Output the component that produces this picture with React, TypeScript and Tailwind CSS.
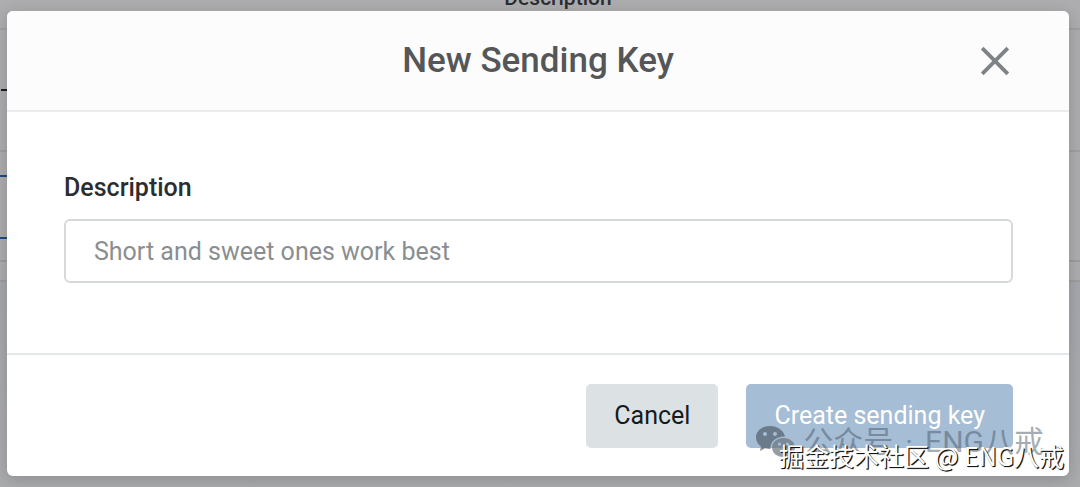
import React from "react";

function BackgroundTable() {
  return (
    <div aria-hidden="true" className="flex min-h-screen flex-col overflow-hidden bg-[#adadb0]">
      <div className="flex h-[30px] items-start justify-center border-b-2 border-[#9fa0a2] pl-9">
        <span className="-mt-3.5 text-[21px] leading-6 font-medium text-[#2c2d30]">Description</span>
      </div>
      <div className="flex h-[122px] items-center border-b-2 border-[#9fa0a2]">
        <span className="ml-px h-[2px] w-4 bg-[#1d1f20]" />
      </div>
      <div className="flex h-[110px] items-center border-b-2 border-[#9c9d9f]">
        <span className="mt-0.5 h-16 w-5 border-y-2 border-[#1f4b7c]" />
      </div>
      <div className="h-5 border-b-2 border-[#9c9d9f]" />
      <div className="grow bg-linear-to-b from-[#a6a7ad] to-[#abacae]" />
    </div>
  );
}

function CloseIcon() {
  return (
    <svg viewBox="0 0 30 30" className="size-[30px]" fill="none" stroke="currentColor" strokeWidth="3.8">
      <path d="M2.200 2.200 27.800 27.800M27.800 2.200 2.200 27.800" />
    </svg>
  );
}

function WeChatIcon() {
  return (
    <svg viewBox="0 0 42 34" className="h-[34px] w-[42px]">
      <path
        fill="#53606b"
        fillOpacity="0.7"
        fillRule="evenodd"
        d="M15 1C7 1 1 6 1 12.500c0 3.700 2 6.800 5 8.900L5 26l5-2.700c1.800.5 3.500.7 5.500.7C15 17 21 11.500 29 11.500h1C28.500 5.500 22.500 1 15 1ZM10 7a2 2 0 1 1 0 4 2 2 0 0 1 0-4Zm10 0a2 2 0 1 1 0 4 2 2 0 0 1 0-4Z"
      />
      <path
        fill="#69747c"
        fillOpacity="0.7"
        fillRule="evenodd"
        d="M28.500 13C21.500 13 17 17.500 17 22.500S21.500 32 28.500 32c1.500 0 2.800-.2 4-.6l4.500 2.100-1.200-3.800c2.600-1.700 4.200-4.300 4.200-7.200 0-5-4.500-9.500-11.500-9.500ZM24.500 17.500a1.600 1.600 0 1 1 0 3.200 1.600 1.600 0 0 1 0-3.200Zm8 0a1.600 1.600 0 1 1 0 3.200 1.600 1.600 0 0 1 0-3.200Z"
      />
    </svg>
  );
}

function Watermarks() {
  return (
    <div className="pointer-events-none absolute right-4 bottom-3.5 whitespace-nowrap">
      <div className="absolute right-5 bottom-3.5 flex items-center gap-1.5 text-[#4b5968]/50">
        <WeChatIcon />
        <span className="flex gap-3 text-[30px] leading-8">
          <span>公众号</span>
          <span>·</span>
          <span>ENG八戒</span>
        </span>
      </div>
      <div className="relative font-['Noto_Sans_CJK_SC',sans-serif] text-[25px] leading-9 text-white [text-shadow:1px_1px_1px_#111,1px_1px_0_#333]">
        掘金技术社区 @ ENG八戒
      </div>
    </div>
  );
}

export default function App() {
  return (
    <div className="relative font-[Roboto,'Noto_Sans_CJK_SC',sans-serif]">
      <BackgroundTable />
      <div className="absolute inset-0 pt-[11px] pr-[11px] pl-[7px]">
        <section
          role="dialog"
          aria-labelledby="dialog-title"
          className="overflow-hidden rounded-md bg-white shadow-[0_4px_16px_rgba(0,0,0,0.18)]"
        >
          <header className="grid grid-cols-[1fr_auto_1fr] items-center border-b-2 border-[#ebecec] bg-[#fcfcfd] px-14 pt-7 pb-[27px]">
            <h1 id="dialog-title" className="col-start-2 text-[35px] leading-[44px] font-medium text-[#555657]">
              New Sending Key
            </h1>
            <button type="button" aria-label="Close" className="mr-[3px] justify-self-end text-[#7d8487]">
              <CloseIcon />
            </button>
          </header>
          <div className="flex flex-col gap-[15px] pt-[60px] pr-14 pb-[70px] pl-[57px]">
            <label htmlFor="description" className="text-[25px] leading-8 font-medium text-[#2b2e30]">
              Description
            </label>
            <input
              id="description"
              type="text"
              placeholder="Short and sweet ones work best"
              className="h-16 w-full rounded-md border-2 border-[#d6d9da] bg-white px-7 text-[25px] text-[#2b2e30] placeholder:text-[#8b8e8f]"
            />
          </div>
          <footer className="flex justify-end gap-7 border-t-2 border-[#e5e8ea] px-14 pt-[29px] pb-7 text-[25px] leading-8">
            <button type="button" className="h-16 rounded-[5px] bg-[#dce2e4] px-7 text-[#171a1c]">
              Cancel
            </button>
            <button type="button" className="h-16 rounded-[5px] bg-[#a5bdd5] px-7 text-white">
              Create sending key
            </button>
          </footer>
        </section>
      </div>
      <Watermarks />
    </div>
  );
}
